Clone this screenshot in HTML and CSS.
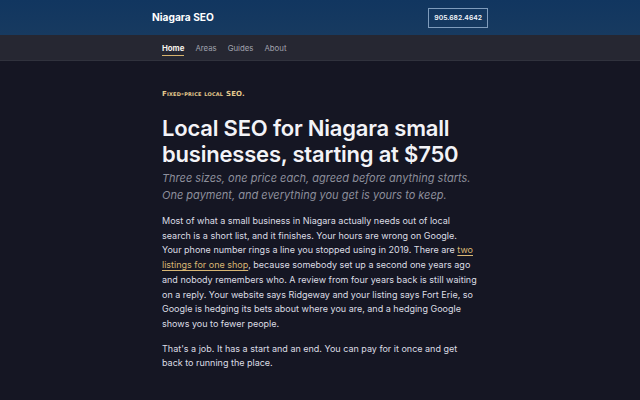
FILE: index.html
```html
<!DOCTYPE html>
<html lang="en">
<head>
<meta charset="utf-8">
<title>Niagara SEO</title>
<link rel="stylesheet" href="styles.css">
</head>
<body>
<header class="topbar">
  <div class="wrap topbar-inner">
    <a class="brand" href="#">Niagara SEO</a>
    <a class="phone" href="#">905.682.4642</a>
  </div>
</header>
<nav class="navbar">
  <div class="wrap nav-inner">
    <a class="nav-link active" href="#">Home</a>
    <a class="nav-link" href="#">Areas</a>
    <a class="nav-link" href="#">Guides</a>
    <a class="nav-link" href="#">About</a>
  </div>
</nav>
<main class="wrap content">
  <p class="eyebrow">Fixed-price local SEO.</p>
  <h1 class="title">Local SEO for Niagara small businesses, starting at $750</h1>
  <p class="lede">Three sizes, one price each, agreed before anything starts. One payment, and everything you get is yours to keep.</p>
  <p class="body">Most of what a small business in Niagara actually needs out of local search is a short list, and it finishes. Your hours are wrong on Google. Your phone number rings a line you stopped using in 2019. There are <a class="inline-link" href="#">two listings for one shop</a>, because somebody set up a second one years ago and nobody remembers who. A review from four years back is still waiting on a reply. Your website says Ridgeway and your listing says Fort Erie, so Google is hedging its bets about where you are, and a hedging Google shows you to fewer people.</p>
  <p class="body">That's a job. It has a start and an end. You can pay for it once and get back to running the place.</p>
</main>
</body>
</html>
```
FILE: styles.css
```css
* { box-sizing: border-box; }
html, body { margin: 0; padding: 0; }
body {
  background: #151623;
  color: #e2e3ea;
  font-family: Inter, "Noto Sans", sans-serif;
}
a { text-decoration: none; color: inherit; }
.wrap {
  max-width: 336px;
  margin: 0 auto;
}
.topbar {
  background: linear-gradient(#113660, #173a60);
  height: 35px;
}
.topbar-inner {
  height: 100%;
  display: flex;
  align-items: center;
  justify-content: space-between;
}
.brand {
  color: #ffffff;
  font-weight: 700;
  font-size: 10.2px;
  margin-top: -1px;
}
.phone {
  border: 1px solid #7f9cbc;
  color: #f2f5fa;
  font-size: 6.8px;
  font-weight: 600;
  padding: 5px 5px;
  line-height: 8px;
  margin-top: 1px;
}
.navbar {
  background: #262732;
  height: 26px;
  border-bottom: 1px solid #30323d;
}
.nav-inner {
  height: 100%;
  display: flex;
  align-items: center;
  gap: 11px;
  padding-left: 10px;
}
.nav-link {
  font-size: 7.8px;
  color: #a0a2ad;
  padding: 3px 0 2px;
  border-bottom: 1px solid transparent;
  margin-top: 1px;
}
.nav-link.active {
  color: #f4f1ea;
  font-weight: 700;
  border-bottom: 1px solid #d7b36d;
}
.content {
  padding: 28px 10px 20px 10px;
}
.eyebrow {
  margin: 0 0 16px;
  font-size: 7px;
  line-height: 10px;
  font-variant: small-caps;
  font-weight: 700;
  letter-spacing: 0.2px;
  color: #e4c98e;
  font-family: "DejaVu Sans", sans-serif;
}
.title {
  margin: 0;
  font-size: 22px;
  line-height: 26px;
  font-weight: 600;
  color: #f3f3f7;
  letter-spacing: -0.2px;
}
.lede {
  margin: 3px 0 11px;
  font-size: 11px;
  line-height: 16.5px;
  font-style: italic;
  color: #8d8f9c;
}
.body {
  margin: 0 0 10px;
  font-size: 9px;
  line-height: 14.7px;
  color: #dcdde4;
}
.inline-link {
  color: #d9b774;
  text-decoration: underline;
  text-underline-offset: 2px;
  text-decoration-thickness: 1px;
}
```
